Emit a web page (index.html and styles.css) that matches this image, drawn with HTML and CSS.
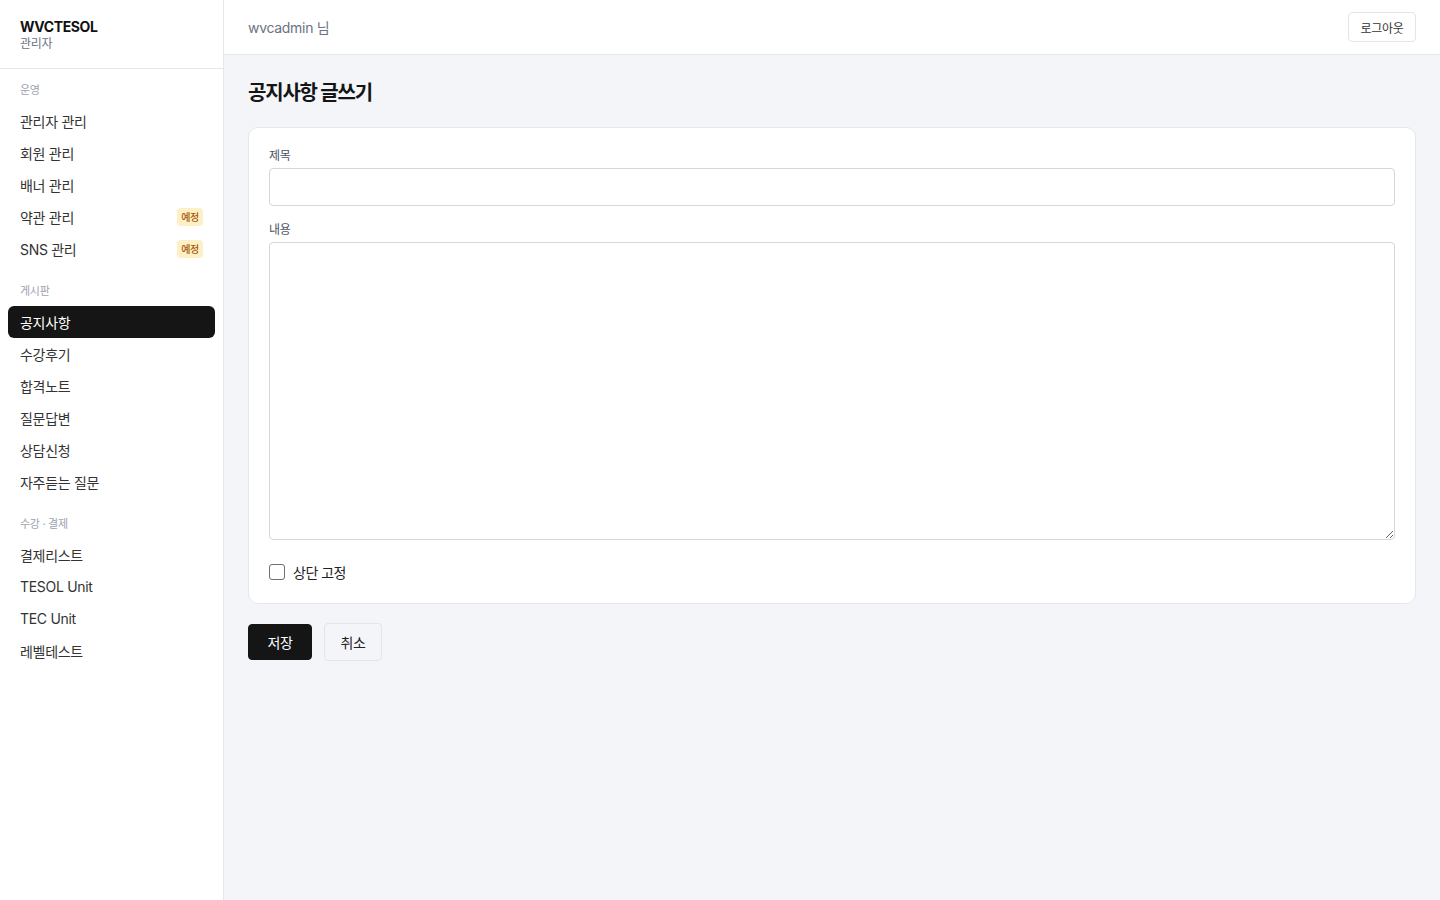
FILE: index.html
```html
<!DOCTYPE html>
<html lang="ko">
<head>
<meta charset="utf-8">
<title>공지사항 글쓰기 - WVCTESOL 관리자</title>
<link rel="stylesheet" href="styles.css">
</head>
<body>
<div class="layout">
  <aside class="sidebar">
    <div class="brand">
      <div class="brand-name">WVCTESOL</div>
      <div class="brand-sub">관리자</div>
    </div>
    <nav class="nav">
      <div class="nav-section">
        <div class="nav-label">운영</div>
        <a class="nav-item" href="#">관리자 관리</a>
        <a class="nav-item" href="#">회원 관리</a>
        <a class="nav-item" href="#">배너 관리</a>
        <a class="nav-item" href="#">약관 관리<span class="badge">예정</span></a>
        <a class="nav-item" href="#">SNS 관리<span class="badge">예정</span></a>
      </div>
      <div class="nav-section">
        <div class="nav-label">게시판</div>
        <a class="nav-item active" href="#">공지사항</a>
        <a class="nav-item" href="#">수강후기</a>
        <a class="nav-item" href="#">합격노트</a>
        <a class="nav-item" href="#">질문답변</a>
        <a class="nav-item" href="#">상담신청</a>
        <a class="nav-item" href="#">자주듣는 질문</a>
      </div>
      <div class="nav-section">
        <div class="nav-label">수강 · 결제</div>
        <a class="nav-item" href="#">결제리스트</a>
        <a class="nav-item" href="#">TESOL Unit</a>
        <a class="nav-item" href="#">TEC Unit</a>
        <a class="nav-item" href="#">레벨테스트</a>
      </div>
    </nav>
  </aside>
  <div class="main">
    <header class="topbar">
      <span class="user">wvcadmin 님</span>
      <button class="btn-logout" type="button">로그아웃</button>
    </header>
    <main class="content">
      <h1 class="page-title">공지사항 글쓰기</h1>
      <form class="form">
        <div class="card">
          <div class="field">
            <label class="field-label" for="title">제목</label>
            <input class="input" id="title" type="text">
          </div>
          <div class="field">
            <label class="field-label" for="body">내용</label>
            <textarea class="textarea" id="body"></textarea>
          </div>
          <label class="check">
            <input type="checkbox" class="checkbox">
            <span>상단 고정</span>
          </label>
        </div>
        <div class="actions">
          <button class="btn btn-primary" type="button">저장</button>
          <button class="btn btn-secondary" type="button">취소</button>
        </div>
      </form>
    </main>
  </div>
</div>
</body>
</html>
```

FILE: styles.css
```css
* { box-sizing: border-box; }

html, body {
  margin: 0;
  padding: 0;
  height: 100%;
}

body {
  font-family: Inter, "Noto Sans CJK KR", "Noto Sans", sans-serif;
  color: #111111;
  background: #f4f5f9;
  font-size: 14px;
}

.layout {
  display: flex;
  min-height: 100vh;
}

/* sidebar */
.sidebar {
  width: 224px;
  flex-shrink: 0;
  background: #ffffff;
  border-right: 1px solid #e5e7eb;
}

.brand {
  height: 69px;
  padding: 18px 20px 0;
  border-bottom: 1px solid #e5e7eb;
}

.brand-name {
  font-size: 14px;
  font-weight: 700;
  line-height: 18px;
  letter-spacing: -0.4px;
  color: #111111;
}

.brand-sub {
  font-size: 12px;
  line-height: 16px;
  letter-spacing: -0.3px;
  color: #6b7280;
}

.nav {
  padding: 13px 8px 8px;
}

.nav-section + .nav-section {
  margin-top: 18px;
}

.nav-label {
  padding: 0 12px;
  font-size: 11px;
  line-height: 16px;
  letter-spacing: -0.3px;
  color: #9ca3af;
  margin-bottom: 7px;
}

.nav-item {
  display: flex;
  align-items: center;
  justify-content: space-between;
  height: 32px;
  padding: 0 12px 1px;
  border-radius: 6px;
  font-size: 14px;
  letter-spacing: -0.3px;
  color: #333333;
  text-decoration: none;
}

.nav-item.active {
  background: #151515;
  color: #ffffff;
}

.badge {
  display: inline-flex;
  align-items: center;
  height: 18px;
  padding: 0 4px;
  border-radius: 4px;
  background: #fdf0c4;
  color: #a35a0d;
  font-size: 10px;
  font-weight: 500;
  letter-spacing: -0.3px;
}

/* main area */
.main {
  flex: 1;
  display: flex;
  flex-direction: column;
}

.topbar {
  height: 55px;
  display: flex;
  align-items: center;
  justify-content: space-between;
  padding: 0 24px;
  background: #ffffff;
  border-bottom: 1px solid #e5e7eb;
}

.user {
  font-size: 14px;
  letter-spacing: -0.3px;
  color: #6b7280;
}

.btn-logout {
  height: 30px;
  width: 68px;
  padding: 0;
  font-family: inherit;
  font-size: 12px;
  letter-spacing: -0.3px;
  color: #333333;
  background: #ffffff;
  border: 1px solid #e3e5e8;
  border-radius: 4px;
}

.content {
  padding: 24px 24px 24px;
}

.page-title {
  margin: 0 0 20px;
  font-size: 20px;
  line-height: 28px;
  font-weight: 700;
  letter-spacing: -1.2px;
  color: #151515;
}

.card {
  background: #ffffff;
  border: 1px solid #e5e7eb;
  border-radius: 10px;
  padding: 19px 20px 21px;
}

.field {
  display: flex;
  flex-direction: column;
  margin-bottom: 15px;
}

.field-label {
  font-size: 12px;
  line-height: 18px;
  letter-spacing: -0.3px;
  color: #4b5563;
  margin-bottom: 3px;
}

.input {
  height: 38px;
  border: 1px solid #d4d6da;
  border-radius: 4px;
  padding: 0 10px;
  font-family: inherit;
  font-size: 14px;
  background: #ffffff;
}

.textarea {
  height: 298px;
  border: 1px solid #d4d6da;
  border-radius: 4px;
  padding: 8px 10px;
  font-family: inherit;
  font-size: 14px;
  resize: vertical;
}

.check {
  display: flex;
  align-items: center;
  gap: 8px;
  margin-top: 22px;
  font-size: 14px;
  letter-spacing: -0.5px;
  color: #222222;
}

.checkbox {
  width: 16px;
  height: 16px;
  margin: 0;
  appearance: none;
  border: 1.5px solid #6b6f76;
  border-radius: 3px;
  background: #ffffff;
}

.actions {
  display: flex;
  align-items: center;
  gap: 12px;
  margin-top: 19px;
}

.btn {
  padding: 0;
  border-radius: 4px;
  font-family: inherit;
  font-size: 14px;
  letter-spacing: -0.4px;
  display: inline-flex;
  align-items: center;
  justify-content: center;
}

.btn-primary {
  height: 36px;
  width: 64px;
  background: #151515;
  color: #ffffff;
  border: 1px solid #151515;
}

.btn-secondary {
  width: 58px;
  height: 38px;
  background: #f4f5f9;
  color: #222222;
  border: 1px solid #e3e5e8;
}
```
